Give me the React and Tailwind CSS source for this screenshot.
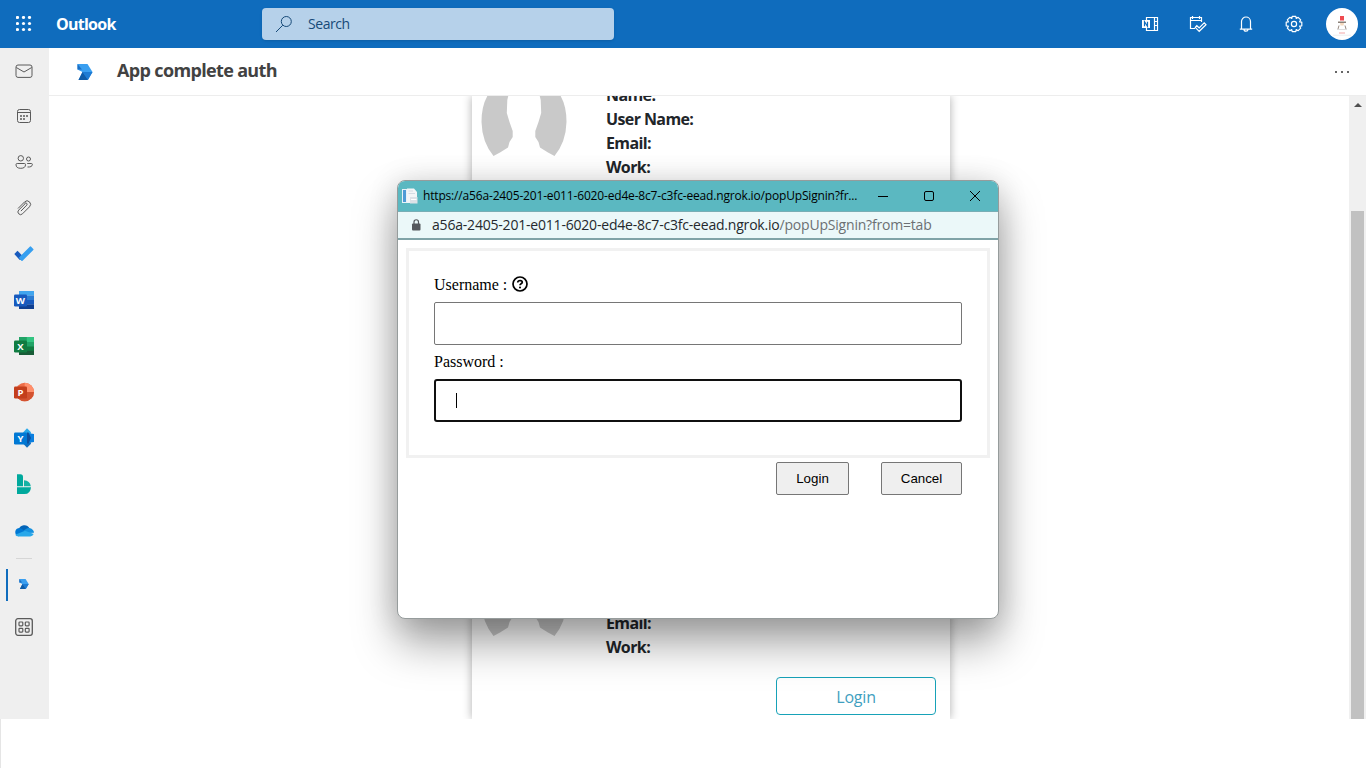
const UI = "font-['Open_Sans','Noto_Sans',sans-serif]";

function Svg({ s = 20, vb = "0 0 20 20", className = "", children }) {
  return (
    <svg width={s} height={s} viewBox={vb} fill="none" className={`shrink-0 ${className}`}>
      {children}
    </svg>
  );
}

function OfficeTile({ letter, color }) {
  return (
    <g>
      <rect x="0" y="4.5" width="13" height="12" rx="1.2" fill={color} />
      <text x="6.4" y="14" fill="#fff" fontSize="9.5" fontWeight="700" textAnchor="middle" fontFamily="Open Sans, sans-serif">
        {letter}
      </text>
    </g>
  );
}

function Logo({ s }) {
  return (
    <Svg s={s} vb="0 0 16 16">
      <path d="M0.5 0H10.5L15.5 8H5.5L0.5 5.5Z" fill="#3a9ff0" />
      <path d="M0.5 0L5 5.5H0.5Z" fill="#1b6fc4" />
      <path d="M5.5 8H15.5L10.5 16H1.5Z" fill="#1a78cf" />
      <path d="M5.5 8L11 16H1.5Z" fill="#0f5ca8" />
      <path d="M5.5 8L11 16L15.5 8Z" fill="#1e7cd4" />
    </Svg>
  );
}

const railIcons = [
  <Svg key="mail" className="stroke-[#5a5a5a]">
    <rect x="2" y="4" width="16" height="12.4" rx="2" />
    <path d="M2.3 6.5L10 11L17.7 6.5" />
  </Svg>,
  <Svg key="calendar" className="stroke-[#5a5a5a]">
    <rect x="3.5" y="3.5" width="13" height="13" rx="2" />
    <path d="M3.5 6.5H16.5" />
    <g fill="#5a5a5a" stroke="none">
      <circle cx="7" cy="10" r="1" /><circle cx="10" cy="10" r="1" /><circle cx="13" cy="10" r="1" />
      <circle cx="7" cy="13" r="1" /><circle cx="10" cy="13" r="1" />
    </g>
  </Svg>,
  <Svg key="people" className="stroke-[#5a5a5a]">
    <circle cx="6.8" cy="6.3" r="2.7" />
    <circle cx="14.5" cy="7" r="2" />
    <path d="M3.2 11.5H10.4Q11.5 11.5 11.5 12.6Q11.5 16.3 6.8 16.3Q2 16.3 2 12.6Q2 11.5 3.2 11.5Z" />
    <path d="M13.2 11.5H17.3Q18.4 11.5 18.4 12.6Q18 15.3 13.5 15" />
  </Svg>,
  <Svg key="clip" className="stroke-[#5a5a5a]">
    <path d="M7.2 12.8L12.8 7.1A1.4 1.4 0 0 0 10.9 5.1M4.3 10.2L10.6 3.9A3.45 3.45 0 0 1 15.5 8.8L8.5 15.8A2.6 2.6 0 0 1 4.7 12.1L11 5.8" strokeLinecap="round" />
  </Svg>,
  <Svg key="todo">
    <path d="M0.3 9.5L3.5 6.3L9.5 12.3L6.3 15.5Q5.8 15.5 5.3 15Z" fill="#185abd" transform="translate(0 .5)" />
    <path d="M4.8 13.7L16 2.5Q16.4 2.2 16.9 2.6L19.3 5Q19.8 5.5 19.3 6L8.3 17Q7.9 17.3 7.4 16.8Z" fill="#369ff0" />
  </Svg>,
  <Svg key="word">
    <path d="M5 1H20V5.6H5Z" fill="#41a5ee" /><path d="M5 5.5H20V10.2H5Z" fill="#2b7cd3" />
    <path d="M5 10H20V14.7H5Z" fill="#185abd" /><path d="M5 14.5H20V19H5Z" fill="#103f91" />
    <OfficeTile letter="W" color="#185abd" />
  </Svg>,
  <Svg key="excel">
    <path d="M5 1H20V19H5Z" fill="#107c41" /><path d="M5 1H12.5V6H5Z" fill="#21a366" />
    <path d="M12.5 1H20V6H12.5Z" fill="#33c481" /><path d="M12.5 6H20V10.5H12.5Z" fill="#21a366" />
    <path d="M5 14.8H20V19H5Z" fill="#185c37" />
    <OfficeTile letter="X" color="#107c41" />
  </Svg>,
  <Svg key="powerpoint">
    <circle cx="10.7" cy="10" r="9.3" fill="#ed6c47" /><path d="M10.7 0.7A9.3 9.3 0 0 1 20 10H10.7Z" fill="#ff8f6b" />
    <path d="M1.4 10H20A9.3 9.3 0 0 1 1.4 10Z" fill="#d35230" />
    <OfficeTile letter="P" color="#c43e1c" />
  </Svg>,
  <Svg key="yammer">
    <path d="M13 0.3L17 4.3L16 8L9 7V4.5Z" fill="#28a8ea" /><path d="M13 19.7L17 15.7L16 12L9 13V15.5Z" fill="#106ebe" />
    <path d="M15 5.3L20 6V14L15 14.7L12 10Z" fill="#0a7fe0" /><path d="M13 4.5H14.500L17 10L14.500 15.5H12Z" fill="#0d4f9e" />
    <OfficeTile letter="Y" color="#0078d4" />
  </Svg>,
  <Svg key="bookings">
    <path d="M3 0.2H6.5Q9 0.2 9 2.7V12.2H3Z" fill="#00a99d" /><path d="M10 6.2Q16 6.5 16.8 12.2H10Z" fill="#14b3a5" />
    <path d="M3 13.2H17Q16.5 20 10.5 20H3Z" fill="#00a99d" />
  </Svg>,
  <Svg key="onedrive">
    <path d="M4.700 9.300A5.900 5.900 0 0 1 15.500 8.200L11 12L5 13Z" fill="#0364b8" />
    <path d="M4.5 16.3A4.2 4.2 0 0 1 4.2 8.2Q6 7.8 7.5 8.8L12.5 12L4.5 16.3Z" fill="#0078d4" />
    <path d="M9.5 10.4L12 9Q13.5 7.6 15.6 8.1Q20 9.5 20 12.8L14 13Z" fill="#1490df" />
    <path d="M1.2 14.7L11 10.8L19.7 14Q18.6 16.4 16.2 16.4H4.5Q2.2 16.4 1.2 14.7Z" fill="#28a8ea" />
  </Svg>,
];

function Rail() {
  return (
    <nav className="flex w-[49px] shrink-0 flex-col items-center bg-[#efefef]">
      {railIcons.map((icon, i) => (
        <div key={i} className={i === 0 ? "flex h-[45px] items-center pr-px" : "flex h-[46px] items-center pr-px"}>{icon}</div>
      ))}
      <div className="mt-[5px] mr-px h-px w-4 bg-[#d6d6d6]" />
      <div className="mt-[10px] flex h-8 w-full items-center">
        <div className="ml-[6px] h-8 w-[2px] bg-[#0f6cbd]" />
        <div className="ml-[11px] -mt-[2px]"><Logo s={10} /></div>
      </div>
      <Svg className="mt-4 mr-px stroke-[#5a5a5a]">
        <rect x="1.7" y="1.7" width="16.6" height="16.6" rx="2.2" strokeWidth="1.3" />
        {[5, 11.3].map((x) => [5, 11.3].map((y) => <rect key={`${x}-${y}`} x={x} y={y} width="3.8" height="3.8" rx=".8" strokeWidth="1.2" />))}
      </Svg>
    </nav>
  );
}

function TopBar() {
  return (
    <header className="flex h-12 shrink-0 items-center bg-[#0f6cbd] text-white">
      <Svg s={16} vb="0 0 16 16" className="ml-4 fill-white">
        {[1.5, 7.5, 13.5].map((x) => [1.5, 7.5, 13.5].map((y) => <circle key={`${x}-${y}`} cx={x} cy={y} r="1.6" />))}
      </Svg>
      <div className="ml-6 w-[206px] text-[16px] font-bold tracking-[-0.75px]">Outlook</div>
      <div className="flex h-8 w-[352px] items-center rounded bg-[#b6d1ea] text-[14px] text-[#174a78] shadow-sm">
        <Svg s={18} vb="0 0 18 18" className="ml-[13px] stroke-[#174a78]">
          <circle cx="11.3" cy="6.5" r="5" /><path d="M7.8 10.2L1 17" />
        </Svg>
        <span className="-mt-px ml-[15px] tracking-[-0.45px]">Search</span>
      </div>
      <div className="ml-auto flex items-center">
        <Svg s={18} vb="0 0 18 18" className="stroke-white">
          <path d="M5.5 5V2.5H16.5V15.5H5.5V13M13.5 2.5V15.5M13.5 6.5H16.5M13.5 10.5H16.5" strokeWidth="1.2" />
          <rect x="1" y="5" width="8" height="8" fill="#fff" stroke="none" />
          <path d="M3.5 11.3V6.7L6.5 11.3V6.7" stroke="#0f6cbd" strokeWidth="1.2" />
        </Svg>
        <Svg s={18} vb="0 0 18 18" className="ml-[30px] stroke-white">
          <path d="M6 13.5H1.5V2.5H12.500V7M1.5 5.5H12.500M3.500 1V4M10.5 1V4" strokeWidth="1.2" />
          <path d="M6.2 12.300L7.8 10.700L10.2 12.9L15.2 7.9L17 9.7L10.2 16.3Z" strokeWidth="1.2" />
        </Svg>
        <Svg s={18} vb="0 0 18 18" className="ml-[30px] stroke-white">
          <path d="M4.5 14V6.5A4.5 4.5 0 0 1 13.5 6.5V14M2.8 14.1H15.2M7 14.5A2 1.7 0 0 0 11 14.5" strokeWidth="1.2" />
        </Svg>
        <Svg s={18} vb="0 0 18 18" className="ml-[30px] stroke-white">
          <circle cx="9" cy="9" r="2.6" strokeWidth="1.2" />
          <path d="M7.2 1.3H10.8L11.2 3.4L13.2 2.3L15.7 4.8L14.6 6.8L16.8 7.2V10.8L14.6 11.2L15.7 13.2L13.2 15.7L11.2 14.6L10.8 16.7H7.2L6.8 14.6L4.8 15.7L2.3 13.2L3.4 11.2L1.2 10.8V7.2L3.4 6.8L2.3 4.8L4.8 2.3L6.8 3.4Z" strokeWidth="1.2" strokeLinejoin="round" />
        </Svg>
        <Svg s={32} vb="0 0 32 32" className="ml-[23px] mr-2">
          <circle cx="16" cy="16" r="16" fill="#fff" />
          <path d="M14 8H18V12.5H14Z" fill="#ef4b50" /><path d="M12 13.5H20V15H12Z" fill="#8b8178" />
          <path d="M14 15H18L17.5 17.5H14.5Z" fill="#f5d9bd" /><path d="M13 17.5L12 21M19 17.5L20 21" stroke="#9a8c82" />
          <path d="M11 21.5H21" stroke="#ddd" /><path d="M13 25H19" stroke="#f4a6a6" /><path d="M7 27.2H25" stroke="#eee" />
        </Svg>
      </div>
    </header>
  );
}

function Avatar() {
  return (
    <svg width="86" height="80" viewBox="481 80 86 80" className="ml-[9px] shrink-0" fill="#c9c9c9">
      <path d="M506 80Q481.5 90 481.5 122Q482 142 493.500 156L500 152.500L508 147.500L509.500 142L512.700 137V131L509.500 122L506.800 113L507.300 100L512 80Z" />
      <path d="M542 80Q566.500 90 566.500 122Q566 142 554.500 156L548 152.500L540 147.500L538.500 142L535.300 137V131L538.500 122L541.200 113L540.700 100L536 80Z" />
    </svg>
  );
}

function Profile({ fields, avatarClass, fieldsClass }) {
  return (
    <div className="flex items-start">
      <div className={avatarClass}><Avatar /></div>
      <dl className={`ml-[39px] text-[16px] leading-6 font-bold tracking-[-0.6px] text-[#212529] ${fieldsClass}`}>
        {fields.map((f) => <dt key={f}>{f}:</dt>)}
      </dl>
    </div>
  );
}

function Popup() {
  return (
    <div className="absolute top-[180px] left-[397px] flex h-[439px] w-[602px] flex-col overflow-hidden rounded-lg border border-[#969c9c] bg-white shadow-[0_24px_44px_rgba(0,0,0,0.36),0_2px_30px_rgba(0,0,0,0.14)]">
      <div className="flex h-[30px] shrink-0 items-center bg-[#5bb8c1] text-black">
        <Svg s={16} vb="0 0 16 16" className="ml-1">
          <path d="M0 1H12V15H0Z" fill="#e8f1f8" /><path d="M1 2H4V14H1Z" fill="#4f9bd6" />
          <path d="M5 0.500H12L15 4V14.500H5Z" fill="#f4f5f7" /><path d="M6.500 3H11M6.500 5.500H13" stroke="#d5dbe3" />
          <path d="M8 9H15.500V15.500H8Z" fill="#dde1e7" /><path d="M9 11.500H14.500" stroke="#fff" />
        </Svg>
        <div className="-mt-px ml-[5px] w-[440px] text-[12px] tracking-[-0.17px] whitespace-nowrap">https://a56a-2405-201-e011-6020-ed4e-8c7-c3fc-eead.ngrok.io/popUpSignin?fr...</div>
        <div className="ml-[15px] h-px w-[10px] bg-black" />
        <div className="-mt-px ml-[36px] h-[10px] w-[10px] rounded-[2px] border border-black" />
        <Svg s={12} vb="0 0 12 12" className="-mt-px ml-[35px] stroke-black"><path d="M1 1L11 11M11 1L1 11" /></Svg>
      </div>
      <div className="flex h-[29px] shrink-0 items-center border-t border-b-2 border-t-[#78aeb5] border-b-[#7fa3a7] bg-[#ebf8f9]">
        <Svg s={12} vb="0 0 12 12" className="-mt-px ml-3">
          <rect x="2" y="4.500" width="8.500" height="7" rx="1" fill="#55585d" /><path d="M4 5V3A2.200 2.200 0 0 1 8.500 3V5" stroke="#55585d" strokeWidth="1.200" />
        </Svg>
        <div className="-mt-px ml-[10px] text-[14px] tracking-[-0.2px] whitespace-nowrap text-[#25292d]">
          a56a-2405-201-e011-6020-ed4e-8c7-c3fc-eead.ngrok.io<span className="text-[#6b7073]">/popUpSignin?from=tab</span>
        </div>
      </div>
      <div className="mx-2 mt-2 flex h-[210px] flex-col border-[3px] border-[#f1f1f1] px-[25px] font-['Liberation_Serif',serif] text-[16px] text-black">
        <div className="mt-[24px] flex h-[18px] items-center">
          <span className="mt-[2px]">Username :</span>
          <Svg s={16} vb="0 0 16 16" className="ml-[5px]">
            <circle cx="8" cy="8" r="7" stroke="#000" strokeWidth="1.700" />
            <path d="M5.700 6.500Q5.900 4.500 8.100 4.500Q10.300 4.600 10.300 6.200Q10.200 7.300 8.800 8Q8 8.500 8 9.300" stroke="#000" strokeWidth="1.700" />
            <circle cx="8" cy="11.500" r="1.050" fill="#000" />
          </Svg>
        </div>
        <div className="mt-[9px] h-[43px] shrink-0 rounded-[2px] border border-[#767676]" />
        <div className="mt-[8px] h-[18px] leading-[18px]">Password :</div>
        <div className="mt-[8px] flex h-[43px] shrink-0 items-center rounded-[3px] border-2 border-[#101010]">
          <div className="ml-[20px] h-[15px] w-px bg-black" />
        </div>
      </div>
      <div className="mt-1 mr-9 flex justify-end gap-8 font-['Liberation_Sans',sans-serif] text-[13.333px] text-black">
        <button className="h-[33px] w-[73px] rounded-[2px] border border-[#767676] bg-[#efefef]">Login</button>
        <button className="h-[33px] w-[81px] rounded-[2px] border border-[#767676] bg-[#efefef]">Cancel</button>
      </div>
    </div>
  );
}

export default function App() {
  return (
    <div className={`relative flex h-[768px] w-[1366px] flex-col overflow-hidden bg-white ${UI}`}>
      <TopBar />
      <div className="flex h-[671px] shrink-0">
        <Rail />
        <div className="flex min-w-0 flex-1 flex-col">
          <div className="flex h-12 shrink-0 items-center border-b border-[#ededed]">
            <div className="ml-7"><Logo s={16} /></div>
            <h1 className="-mt-[2px] ml-[24px] text-[18px] font-bold tracking-[-0.65px] text-[#424242]">App complete auth</h1>
            <Svg s={16} vb="0 0 16 16" className="mr-4 ml-auto fill-[#666]">
              <path d="M1 7H3V9H1ZM7 7H9V9H7ZM13 7H15V9H13Z" />
            </Svg>
          </div>
          <div className="flex min-h-0 flex-1">
            <main className="flex flex-1 overflow-hidden">
              <section className="ml-[423px] flex w-[478px] flex-col bg-white shadow-[0_0_9px_rgba(0,0,0,0.32)]">
                <div className="h-[480px] overflow-hidden">
                  <Profile fields={["Name", "User Name", "Email", "Work"]} avatarClass="-mt-4" fieldsClass="-mt-[13px]" />
                </div>
                <Profile fields={["Email", "Work"]} avatarClass="-mt-4" fieldsClass="mt-[35px]" />
                <button className="mt-[18px] mr-[14px] h-[38px] w-40 self-end rounded border border-[#17a2b8] pt-px text-[16px] tracking-[-0.2px] text-[#3f9fc0]">Login</button>
              </section>
            </main>
            <div className="flex w-[17px] flex-col items-center bg-[#f0f0f0]">
              <Svg s={8} vb="0 0 8 8" className="mt-[5px]"><path d="M0 6L4 2L8 6Z" fill="#505050" /></Svg>
              <div className="mt-[102px] w-[13px] flex-1 bg-[#c1c1c1]" />
            </div>
          </div>
        </div>
      </div>
      <div className="min-h-0 flex-1 border-l border-[#e5e5e5] bg-white" />
      <Popup />
    </div>
  );
}
